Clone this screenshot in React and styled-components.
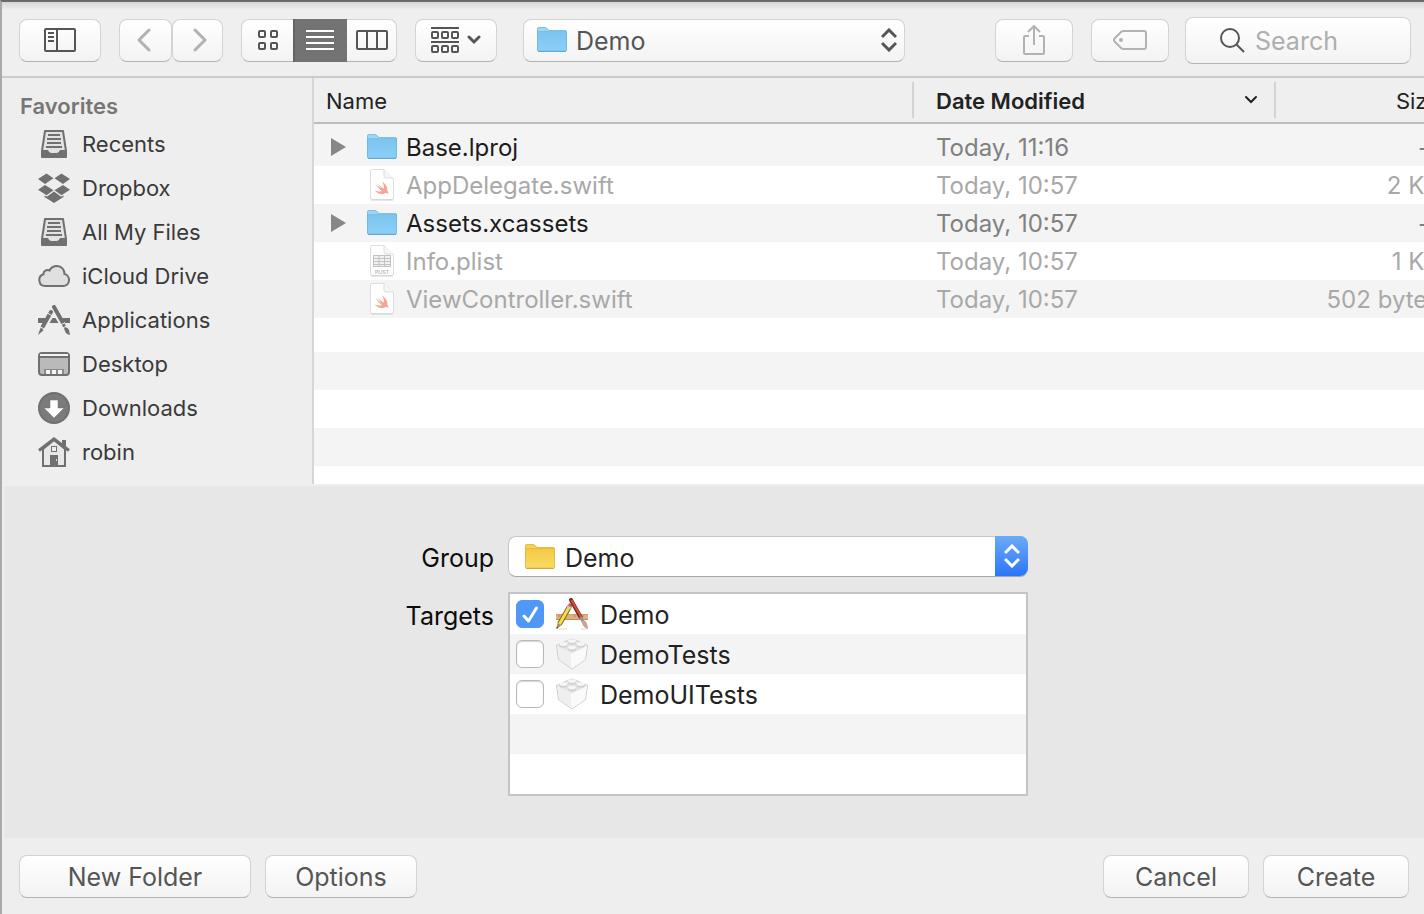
import React from "react";
import styled, { createGlobalStyle } from "styled-components";

const GlobalStyle = createGlobalStyle`
  * { box-sizing: border-box; }
  body {
    margin: 0;
    background: #efefef;
    font-family: Inter, "Liberation Sans", sans-serif;
    overflow-x: hidden;
  }
  button, input, select { font: inherit; color: inherit; margin: 0; }
  svg { display: block; flex: none; }
`;

/* ---------- window ---------- */

const Window = styled.div`
  display: flex;
  flex-direction: column;
  min-height: 100vh;
  border-top: 2px solid #6a6a6a;
  border-left: 2px solid #a9a9a9;
  background: #efefef;
`;

const Toolbar = styled.header`
  display: flex;
  align-items: center;
  justify-content: space-between;
  gap: 18px;
  height: 76px;
  padding: 2px 13px 0 17px;
  border-bottom: 2px solid #cbcbcb;
  background: linear-gradient(#d6d6d6, #efefef 8px);
`;

const ToolGroup = styled.div`
  display: flex;
  align-items: center;
  gap: ${(p) => p.$gap}px;
`;

const Spacer = styled.div`
  flex: 1;
`;

const Button = styled.button`
  display: flex;
  align-items: center;
  justify-content: center;
  gap: 8px;
  flex: none;
  width: ${(p) => p.$width}px;
  height: 43px;
  padding: 0;
  border: 1px solid #d3d3d3;
  border-bottom-color: #b4b4b4;
  border-radius: 8px;
  background: linear-gradient(#ffffff, #f3f3f3);
  color: ${(p) => (p.$dim ? "#b2b2b2" : "#555555")};
  font-size: 25px;
  line-height: 32px;
`;

const ButtonPair = styled.div`
  display: flex;
`;

const Segments = styled.div`
  display: flex;
  height: 43px;
  border-radius: 8px;
  border: 1px solid #d3d3d3;
  border-bottom-color: #b4b4b4;
  background: linear-gradient(#ffffff, #f3f3f3);
`;

const Segment = styled.button`
  display: flex;
  align-items: center;
  justify-content: center;
  width: ${(p) => p.$width}px;
  margin: ${(p) => (p.$active ? "-1px 0" : "0")};
  padding: 0;
  border: 0;
  background: ${(p) => (p.$active ? "#737373" : "none")};
  box-shadow: ${(p) => (p.$active ? "inset 2px 0 #646464" : "none")};
  color: ${(p) => (p.$active ? "#ffffff" : "#555555")};
`;

const SearchField = styled.label`
  display: flex;
  align-items: center;
  gap: 10px;
  width: 226px;
  height: 47px;
  padding: 0 12px 0 34px;
  border: 1px solid #d3d3d3;
  border-bottom-color: #b4b4b4;
  border-radius: 8px;
  background: linear-gradient(#ffffff, #f3f3f3);
  color: #555555;
`;

const SearchInput = styled.input`
  flex: 1;
  min-width: 0;
  padding: 2px 0 0;
  border: 0;
  outline: 0;
  background: none;
  font-size: 25px;
  line-height: 32px;
  &::placeholder { color: #aeaeae; opacity: 1; }
`;

const Caption = styled.span`
  padding-top: 2px;
`;

/* ---------- pop-up menus ---------- */

const PopUp = styled.div`
  position: relative;
  flex: none;
  width: ${(p) => p.$width}px;
  color: #555555;
`;

const PathSelect = styled.select`
  display: block;
  width: 100%;
  height: 43px;
  padding: 2px 40px 0 52px;
  border: 1px solid #d3d3d3;
  border-bottom-color: #b4b4b4;
  border-radius: 8px;
  appearance: none;
  background: linear-gradient(#ffffff, #f3f3f3);
  font-size: 25px;
`;

const GroupSelect = styled(PathSelect)`
  height: 41px;
  padding-left: 56px;
  border-color: #c6c6c6;
  border-bottom-color: #a8a8a8;
  background: #ffffff;
  color: #222222;
`;

const PopUpIcon = styled.span`
  position: absolute;
  left: ${(p) => p.$left}px;
  top: 8px;
  pointer-events: none;
`;

const PopUpArrows = styled.span`
  position: absolute;
  right: 8px;
  top: 9px;
  pointer-events: none;
`;

const BlueArrows = styled.span`
  position: absolute;
  right: 0;
  top: 0;
  bottom: 0;
  width: 33px;
  display: flex;
  align-items: center;
  justify-content: center;
  border-radius: 0 8px 8px 0;
  background: linear-gradient(#6cabf5, #2a76f8);
  color: #ffffff;
  pointer-events: none;
`;

/* ---------- browser ---------- */

const Browser = styled.div`
  display: flex;
  flex: 1;
`;

const Sidebar = styled.nav`
  flex: none;
  width: 312px;
  padding-top: 12px;
  border-right: 2px solid #d6d6d6;
  background: #eeeeee;
`;

const SidebarTitle = styled.h2`
  margin: 0;
  padding-left: 18px;
  color: #767676;
  font-size: 22px;
  font-weight: 600;
  line-height: 32px;
`;

const SidebarItem = styled.a`
  display: flex;
  align-items: center;
  gap: 12px;
  height: 44px;
  padding-left: 36px;
  color: #3a3a3a;
  font-size: 22px;
  line-height: 32px;
  text-decoration: none;
`;

const IconSlot = styled.span`
  display: flex;
  align-items: center;
  justify-content: center;
  flex: none;
  width: ${(p) => p.$width}px;
`;

const FilePane = styled.div`
  flex: 1;
  min-width: 0;
  overflow: hidden;
  background: repeating-linear-gradient(#f4f4f4 0 38px, #ffffff 38px 76px) 0 46px / 100% 76px;
`;

const FileTable = styled.table`
  width: calc(100% + 16px);
  table-layout: fixed;
  border-collapse: separate;
  border-spacing: 0;
  tbody::before { content: ""; display: block; height: 4px; }
`;

const HeadCell = styled.th`
  width: ${(p) => p.$width || "auto"};
  height: 46px;
  padding: 0;
  border-bottom: 2px solid #bdbdbd;
  background: #efefef;
  color: #222222;
  font-size: 22px;
  font-weight: ${(p) => (p.$sorted ? 600 : 400)};
  line-height: 36px;
  text-align: ${(p) => p.$align || "left"};
`;

const HeadLabel = styled.div`
  display: flex;
  align-items: center;
  justify-content: ${(p) => (p.$end ? "flex-end" : "space-between")};
  height: 36px;
  padding-left: ${(p) => p.$pad || 0}px;
  padding-right: ${(p) => (p.$end ? 0 : 16)}px;
  border-right: ${(p) => (p.$end ? "0" : "2px solid #d4d4d4")};
`;

const FileRow = styled.tr`
  background: ${(p) => (p.$shaded ? "#f4f4f4" : "#ffffff")};
`;

const Cell = styled.td`
  height: 38px;
  padding: ${(p) => (p.$plain ? 2 : 0)}px 0 0 ${(p) => p.$pad || 0}px;
  color: ${(p) => p.$color};
  font-size: 24px;
  line-height: 32px;
  text-align: ${(p) => p.$align || "left"};
  white-space: nowrap;
`;

const FileName = styled.div`
  display: flex;
  align-items: center;
  gap: 8px;
`;

const Disclosure = styled.button`
  display: flex;
  width: 28px;
  padding: 0;
  border: 0;
  background: none;
`;

/* ---------- accessory form ---------- */

const Accessory = styled.section`
  display: grid;
  grid-template-columns: 96px 520px;
  grid-template-rows: 40px auto;
  justify-content: center;
  gap: 16px 14px;
  margin: 2px 0 0 2px;
  padding: 50px 2px 42px 0;
  background: #e7e7e7;
`;

const FieldLabel = styled.label`
  padding-top: 2px;
  color: #0c0c0c;
  font-size: 25px;
  line-height: 40px;
  text-align: right;
`;

const ListLabel = styled(FieldLabel)`
  padding-top: 4px;
`;

const TargetList = styled.div`
  height: 204px;
  border: 2px solid #c4c4c4;
  background: repeating-linear-gradient(#ffffff 0 40px, #f4f4f4 40px 80px);
`;

const TargetRow = styled.label`
  display: flex;
  align-items: center;
  height: 40px;
  padding-left: 6px;
  gap: 11px;
  color: #222222;
  font-size: 25px;
  line-height: 32px;
`;

const CheckWrap = styled.span`
  position: relative;
  width: 28px;
  height: 28px;
  svg { position: absolute; left: 6px; top: 6px; pointer-events: none; }
  input:not(:checked) + svg { display: none; }
`;

const CheckBox = styled.input`
  display: block;
  width: 28px;
  height: 28px;
  appearance: none;
  border: 1px solid #b8b8b8;
  border-radius: 6px;
  background: #ffffff;
  box-shadow: inset 0 1px 1px #d6d6d6;
  &:checked { border-color: #4f98f8; background: #4f98f8; box-shadow: none; }
`;

const Footer = styled.footer`
  display: flex;
  align-items: center;
  gap: 14px;
  height: 76px;
  padding: 0 15px 0 17px;
  background: #eeeeee;
`;

/* ---------- icons ---------- */

const line = { fill: "none", stroke: "currentColor", strokeWidth: 2 };

const SidebarIcon = () => (
  <svg width="32" height="24" {...line}>
    <rect x="1" y="1" width="30" height="22" rx="1" />
    <path d="M13 1v22M4 5h6M4 9h6M4 13h6" />
  </svg>
);
const BackIcon = () => (
  <svg width="18" height="24" {...line} strokeWidth="3" strokeLinecap="round" strokeLinejoin="round">
    <path d="M12 2 2 12l10 10" />
  </svg>
);
const ForwardIcon = () => (
  <svg width="18" height="24" {...line} strokeWidth="3" strokeLinecap="round" strokeLinejoin="round">
    <path d="m6 2 10 10L6 22" />
  </svg>
);
const GridIcon = () => (
  <svg width="20" height="20" {...line}>
    {[[1, 1], [13, 1], [1, 13], [13, 13]].map(([x, y]) => (
      <rect key={x + "-" + y} x={x} y={y} width="6" height="6" rx="1" />
    ))}
  </svg>
);
const ListIcon = () => (
  <svg width="28" height="20" {...line}>
    <path d="M0 1h28M0 7h28M0 13h28M0 19h28" />
  </svg>
);
const ColumnsIcon = () => (
  <svg width="32" height="20" {...line}>
    <rect x="1" y="1" width="30" height="18" rx="1" />
    <path d="M11 1v18M21 1v18" />
  </svg>
);
const ArrangeIcon = () => (
  <svg width="28" height="26" {...line}>
    <path d="M0 1h28M0 15h28" />
    {[5, 19].map((y) => [1, 11, 21].map((x) => (
      <rect key={x + "-" + y} x={x} y={y} width="6" height="6" rx="1" />
    )))}
  </svg>
);
const ChevronDown = ({ weight = 3 }) => (
  <svg width="14" height="10" {...line} strokeWidth={weight} strokeLinecap="round">
    <path d="m2 2 5 5 5-5" />
  </svg>
);
const UpDownIcon = () => (
  <svg width="16" height="24" {...line} strokeWidth="3">
    <path d="m1 9 7-7 7 7M1 15l7 7 7-7" />
  </svg>
);
const ShareIcon = () => (
  <svg width="22" height="30" {...line}>
    <path d="M6 11H2q-1 0-1 1v16q0 1 1 1h18q1 0 1-1V12q0-1-1-1h-4M11 1v19M5 7l6-6 6 6" />
  </svg>
);
const TagIcon = () => (
  <svg width="34" height="20" {...line}>
    <path d="M11 1h20q2 0 2 2v14q0 2-2 2H11q-2 0-3-1L2 12q-2-2 0-4l6-6q1-1 3-1Z" />
    <circle cx="8" cy="10" r="2" fill="currentColor" stroke="none" />
  </svg>
);
const SearchIcon = () => (
  <svg width="25" height="25" {...line}>
    <circle cx="10" cy="10" r="9" />
    <path d="m16 16 8 8" />
  </svg>
);
const FolderIcon = ({ tone = "blue" }) => {
  const c = tone === "blue"
    ? { tab: "#9bd8f8", top: "#7cc5ef", low: "#8bcff6", edge: "#62a9d4" }
    : { tab: "#f3d25e", top: "#f5ca45", low: "#f9da66", edge: "#d8a92e" };
  const id = "folder-" + tone;
  return (
    <svg width="32" height="27" viewBox="-1 0 32 27">
      <defs>
        <linearGradient id={id} x1="0" y1="0" x2="0" y2="1">
          <stop offset="0" stopColor={c.top} />
          <stop offset="1" stopColor={c.low} />
        </linearGradient>
      </defs>
      <path d="M0 2q0-2 2-2h6q1 0 2 1l2 2h16q2 0 2 2v19H0Z" fill={c.tab} />
      <path d="M0 5h30v18q0 1-1 1H1q-1 0-1-1Z" fill={`url(#${id})`} />
      <path d="M0 4.500h30" stroke={c.edge} opacity=".5" />
      <path d="M.5 5V2Q.5.5 2 .5h6l4 3h16q1.500 0 1.500 1.500v18q0 1-1 1h-27q-1 0-1-1V5" fill="none" stroke={c.edge} opacity=".5" />
      <path d="M1 24.500h28" stroke={c.edge} />
    </svg>
  );
};
const Page = ({ children }) => (
  <svg width="26" height="32" viewBox="-1 0 26 32">
    <path d="M1.500.5H14l9.500 9.500v19q0 1.500-1.500 1.500H2Q.5 30.500.5 29V2Q.5.5 2 .5Z" fill="#fff" stroke="#dedede" />
    <path d="M14 .5V7q0 2 2 2h7" fill="#f6f6f6" stroke="#dedede" />
    <path d="M1 31h22" stroke="#d2d2d2" />
    {children}
  </svg>
);
const SwiftIcon = () => (
  <Page>
    <path d="M12 12.500c4 2.800 6 6 5.200 9 1.300 1.500 1.300 2.800.9 3.600-1-1.500-2.200-1.200-3.400-.7-3.600 1.600-7.700.2-10.200-3.300 2.500 1.600 5.300 2 7.300.8-2.600-2-4.500-4.300-6.200-6.900 2 1.800 3.800 3.200 5.800 4.500-1.500-1.600-2.700-3.200-3.900-5 2.300 2.200 4.400 4 6.300 5.100.4-2.400-.4-4.800-1.800-7.100Z" fill="#f6a493" />
  </Page>
);
const PlistIcon = () => (
  <Page>
    <rect x="3.500" y="10.500" width="17" height="11" fill="#f1f1f1" stroke="#c2c2c2" />
    <path d="M3 13.500h18M3 16.500h18M3 19.500h18M9 10v12M14.500 10v12" stroke="#c2c2c2" fill="none" />
    <text x="12" y="29" textAnchor="middle" fontSize="5" fontWeight="600" fill="#b4b4b4">PLIST</text>
  </Page>
);
const TriangleIcon = () => (
  <svg width="16" height="18"><path d="M1 0v18l15-9Z" fill="#878787" /></svg>
);
const g = "#707070";
const TrayIcon = () => (
  <svg width="26" height="28">
    <path d="M4 1h18l3 20v6H1v-6Z" fill="#e2e2e2" stroke={g} strokeWidth="2" strokeLinejoin="round" />
    <path d="M7 5h12M6 9h14M6 13h14M5 17h16" stroke={g} strokeWidth="2" />
    <path d="M1 20h6q1 3 3 3h6q2 0 3-3h6v7H1Z" fill={g} />
  </svg>
);
const DropboxIcon = () => (
  <svg width="32" height="30" fill={g}>
    <path d="m0 6 8.500-5.500 7 4.800L7 11ZM32 6 23.500.5l-7 4.800L25 11ZM0 16.700 7 12l8.500 5.200-7 5.100ZM32 16.700 25 12l-8.500 5.200 7 5.100Z" />
    <path d="m16 18.500 6.500 4.800 1 .2 2-1v1.500L16 30l-9.500-6v-1.500l2 1 1-.2Z" />
  </svg>
);
const CloudIcon = () => (
  <svg width="32" height="22">
    <path d="M7 21a6 6 0 0 1-1.500-11.700C5 6 9 4 11.500 5.500 13 2.500 16 1 19 1c4.500 0 7.500 3.500 7.500 8C29 9.500 31 12 31 15c0 3.500-2.500 6-6 6Z" fill="#e0e0e0" stroke={g} strokeWidth="2" />
  </svg>
);
const AppsIcon = () => (
  <svg width="32" height="30" fill="none" stroke={g}>
    <path d="M0 15.500h7.500M24.500 15.500H32" strokeWidth="5" />
    <path d="M14.500 13h3l3 5h-9Z" fill={g} stroke="none" />
    <path d="M13 7 4.500 22" strokeWidth="4" strokeLinecap="round" />
    <path d="m16 2 8.500 15" strokeWidth="4" strokeLinecap="round" />
    <path d="m24.500 18 2 3.500" strokeWidth="3" />
    <path d="M26 22.500q3.500-1 5 2.500l1 5q-5.500-1-6-7.500Z" fill={g} stroke="none" />
    <path d="m2.500 23 3.300 2L0 30Z" fill={g} stroke="none" />
    <path d="m9.500 8 5 3M22 20.500l5-3M2 21.500l5 3" stroke="#eee" />
  </svg>
);
const DesktopIcon = () => (
  <svg width="32" height="24">
    <rect x="1" y="1" width="30" height="22" rx="3" fill="#bababa" stroke={g} strokeWidth="2" />
    <path d="M2 3h28" stroke="#f2f2f2" strokeWidth="2" />
    <path d="M1 5h30" stroke={g} strokeWidth="2" />
    <path d="M6 17h20v5H6Z" fill="#8b8b8b" />
    <path d="M8 18h4v4H8ZM14 18h4v4h-4ZM20 18h4v4h-4Z" fill="#f4f4f4" />
  </svg>
);
const DownloadIcon = () => (
  <svg width="32" height="32">
    <circle cx="16" cy="16" r="15" fill="#7b7b7b" stroke={g} strokeWidth="2" />
    <path d="M12 8h8v8h6L16 26 6 16h6Z" fill="#fff" stroke={g} strokeWidth=".5" />
  </svg>
);
const HomeIcon = () => (
  <svg width="32" height="30">
    <path d="M24 3h4v8h-4Z" fill={g} />
    <path d="M5 12v17h22V12L16 3Z" fill="#e8e8e8" stroke={g} strokeWidth="2" />
    <path d="M1 13.500 16 2l15 11.500" fill="none" stroke={g} strokeWidth="3" />
    <rect x="13.500" y="9.500" width="5" height="5" fill="#eee" stroke={g} />
    <path d="M12 18h8v12h-8Z" fill={g} />
    <path d="M18 22h1v2h-1Z" fill="#ddd" />
  </svg>
);
const CheckIcon = () => (
  <svg width="17" height="17" {...line} stroke="#fff" strokeWidth="3" strokeLinecap="round" strokeLinejoin="round">
    <path d="m2 10 4.500 5L14.500 2" />
  </svg>
);
const AppTargetIcon = () => (
  <svg width="34" height="32">
    <path d="M4 31h8M26 31h6" stroke="#d8d8d8" />
    <path d="M1 16h32v6H1Z" fill="#e0b083" />
    <path d="M1 16.500h32" stroke="#d39c69" />
    <path d="M1 21.500h32" stroke="#c18d5e" />
    <path d="M4 17v2M8 17v2M20 17v2M24 17v2M28 17v2" stroke="#b98354" />
    <path d="M14.500 8.500 4.500 26" stroke="#7d6520" strokeWidth="5" />
    <path d="M14.500 8.500 4.500 26" stroke="#f6df4a" strokeWidth="3" />
    <path d="m16 6-2 3.500" stroke="#e2574d" strokeWidth="4" />
    <path d="m14.500 8.500-1 1.800" stroke="#c9cdd0" strokeWidth="4" />
    <path d="m2.500 25 4 2.300L1.500 31Z" fill="#b58a50" />
    <path d="m1.500 31 .3-2.500 1.700 1Z" fill="#3a2f20" />
    <path d="M16 2l9.500 17" stroke="#7c2a1c" strokeWidth="4" strokeLinecap="round" />
    <path d="M16.500 2 26 19" stroke="#cf5335" strokeWidth="2" />
    <path d="m25.500 19 2.500 4.500" stroke="#8f9496" strokeWidth="3" />
    <path d="M26.500 24 30 22.500q3 3.500 3 8.500-5-1.500-6.500-7Z" fill="#d0a28f" />
  </svg>
);
const BrickIcon = () => (
  <svg width="34" height="32">
    <path d="M1.500 7.500 9 4l8-3 8 3 7.500 3.500-2 14L17 31 3.500 21.500Z" fill="#f4f4f4" stroke="#c9c9c9" strokeLinejoin="round" />
    <path d="M2 8 17 15.500v15L4 21.500Z" fill="#efefef" />
    <path d="M32 8 17 15.500v15l13-9Z" fill="#fafafa" />
    <path d="M2 8 17 15l15-7-15-6.500Z" fill="#e3e3e3" />
    <path d="M17 15.500V30" stroke="#fff" />
    {[[17, 3], [8.500, 6], [25.500, 6], [17, 9.500]].map(([x, y]) => (
      <g key={x + "-" + y}>
        <path d={`M${x - 4} ${y}v2a4 1.800 0 0 0 8 0v-2Z`} fill="#d3d3d3" />
        <ellipse cx={x} cy={y} rx="4" ry="1.800" fill="#f7f7f7" />
      </g>
    ))}
  </svg>
);

/* ---------- data ---------- */

const favorites = [
  ["Recents", TrayIcon],
  ["Dropbox", DropboxIcon],
  ["All My Files", TrayIcon],
  ["iCloud Drive", CloudIcon],
  ["Applications", AppsIcon],
  ["Desktop", DesktopIcon],
  ["Downloads", DownloadIcon],
  ["robin", HomeIcon],
];

const files = [
  { name: "Base.lproj", Icon: FolderIcon, folder: true, date: "Today, 11:16", size: "--" },
  { name: "AppDelegate.swift", Icon: SwiftIcon, date: "Today, 10:57", size: "2 KB" },
  { name: "Assets.xcassets", Icon: FolderIcon, folder: true, date: "Today, 10:57", size: "--" },
  { name: "Info.plist", Icon: PlistIcon, date: "Today, 10:57", size: "1 KB" },
  { name: "ViewController.swift", Icon: SwiftIcon, date: "Today, 10:57", size: "502 bytes" },
];

const targets = [
  ["Demo", AppTargetIcon, true],
  ["DemoTests", BrickIcon, false],
  ["DemoUITests", BrickIcon, false],
];

export default function App() {
  return (
    <Window>
      <GlobalStyle />
      <Toolbar>
        <ToolGroup $gap={26}>
          <ToolGroup $gap={18}>
            <Button $width={82} aria-label="Toggle sidebar"><SidebarIcon /></Button>
            <ButtonPair>
              <Button $width={53} $dim aria-label="Back"><BackIcon /></Button>
              <Button $width={51} $dim aria-label="Forward"><ForwardIcon /></Button>
            </ButtonPair>
            <Segments>
              <Segment $width={51} aria-label="Icon view"><GridIcon /></Segment>
              <Segment $width={54} $active aria-label="List view" aria-pressed="true"><ListIcon /></Segment>
              <Segment $width={49} aria-label="Column view"><ColumnsIcon /></Segment>
            </Segments>
            <Button $width={82} aria-label="Arrange items"><ArrangeIcon /><ChevronDown /></Button>
          </ToolGroup>
          <PopUp $width={382}>
            <PathSelect aria-label="Current folder" defaultValue="Demo"><option>Demo</option></PathSelect>
            <PopUpIcon $left={13}><FolderIcon /></PopUpIcon>
            <PopUpArrows><UpDownIcon /></PopUpArrows>
          </PopUp>
        </ToolGroup>
        <ToolGroup $gap={16}>
          <ToolGroup $gap={18}>
            <Button $width={78} $dim aria-label="Share"><ShareIcon /></Button>
            <Button $width={78} $dim aria-label="Tags"><TagIcon /></Button>
          </ToolGroup>
          <SearchField>
            <SearchIcon />
            <SearchInput type="text" placeholder="Search" aria-label="Search" />
          </SearchField>
        </ToolGroup>
      </Toolbar>

      <Browser>
        <Sidebar>
          <SidebarTitle>Favorites</SidebarTitle>
          {favorites.map(([name, Icon]) => (
            <SidebarItem key={name} href="#">
              <IconSlot $width={32}><Icon /></IconSlot>
              {name}
            </SidebarItem>
          ))}
        </Sidebar>
        <FilePane>
          <FileTable>
            <thead>
              <tr>
                <HeadCell><HeadLabel $pad={12}><Caption>Name</Caption></HeadLabel></HeadCell>
                <HeadCell $width="362px" $sorted aria-sort="descending">
                  <HeadLabel $pad={22}><Caption>Date Modified</Caption><ChevronDown weight={2} /></HeadLabel>
                </HeadCell>
                <HeadCell $width="164px"><HeadLabel $end><Caption>Size</Caption></HeadLabel></HeadCell>
              </tr>
            </thead>
            <tbody>
              {files.map(({ name, Icon, folder, date, size }, i) => (
                <FileRow key={name} $shaded={i % 2 === 0}>
                  <Cell $pad={16} $color={folder ? "#1c1c1c" : "#a8a8a8"}>
                    <FileName>
                      <Disclosure as={folder ? "button" : "span"} aria-label={folder ? "Expand" : undefined}>
                        {folder && <TriangleIcon />}
                      </Disclosure>
                      <IconSlot $width={32}><Icon /></IconSlot>
                      <Caption>{name}</Caption>
                    </FileName>
                  </Cell>
                  <Cell $plain $pad={22} $color={folder ? "#808080" : "#a8a8a8"}>{date}</Cell>
                  <Cell $plain $align="right" $color={folder ? "#808080" : "#a8a8a8"}>{size}</Cell>
                </FileRow>
              ))}
            </tbody>
          </FileTable>
        </FilePane>
      </Browser>

      <Accessory>
        <FieldLabel htmlFor="group">Group</FieldLabel>
        <PopUp $width={520}>
          <GroupSelect id="group" defaultValue="Demo"><option>Demo</option></GroupSelect>
          <PopUpIcon $left={16}><FolderIcon tone="yellow" /></PopUpIcon>
          <BlueArrows><UpDownIcon /></BlueArrows>
        </PopUp>
        <ListLabel as="span" id="targets-label">Targets</ListLabel>
        <TargetList role="group" aria-labelledby="targets-label">
          {targets.map(([name, Icon, on]) => (
            <TargetRow key={name}>
              <CheckWrap>
                <CheckBox type="checkbox" defaultChecked={on} />
                <CheckIcon />
              </CheckWrap>
              <Icon />
              <Caption>{name}</Caption>
            </TargetRow>
          ))}
        </TargetList>
      </Accessory>

      <Footer>
        <Button $width={232}><Caption>New Folder</Caption></Button>
        <Button $width={152}><Caption>Options</Caption></Button>
        <Spacer />
        <Button $width={146}><Caption>Cancel</Caption></Button>
        <Button $width={146}><Caption>Create</Caption></Button>
      </Footer>
    </Window>
  );
}
